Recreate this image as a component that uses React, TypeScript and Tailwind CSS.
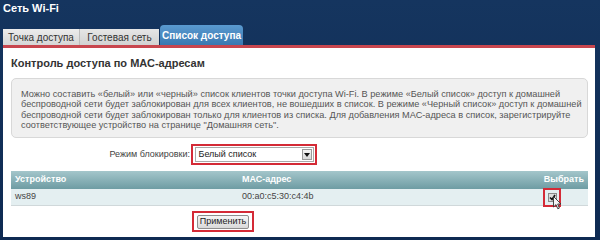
import React from "react";

export default function App() {
  return (
    <div
      className="relative w-[600px] h-[240px] overflow-hidden bg-gradient-to-b from-[#15355f] to-[#0e2a52]"
      style={{ fontFamily: '"Liberation Sans", Arial, sans-serif' }}
    >
      {/* Title */}
      <div className="h-[24px] pl-[3px] pt-[1px] text-[11px] font-bold leading-[14px] text-white">
        Сеть Wi-Fi
      </div>
      {/* Tabs */}
      <div className="flex h-[21px] items-end pl-[3px]">
        <div className="flex h-[16px] w-[77px] items-center justify-center border-r border-[#bdbdbd] bg-gradient-to-b from-[#ececec] to-[#d6d6d6] text-[10px] text-[#333]">
          Точка доступа
        </div>
        <div className="flex h-[16px] w-[79px] items-center justify-center bg-gradient-to-b from-[#e6e6e6] to-[#d2d2d2] text-[10px] text-[#333]">
          Гостевая сеть
        </div>
        <div className="ml-[1px] flex h-[20px] w-[83px] items-center justify-center rounded-t-[4px] bg-gradient-to-b from-[#5a9ad0] to-[#3a78b0] pt-[1px] text-[10px] font-bold text-white">
          Список доступа
        </div>
      </div>
      {/* Red line */}
      <div className="ml-[3px] h-[3px] w-[592px] bg-[#c8464e]"></div>
      {/* Panel */}
      <div className="relative ml-[3px] flex h-[189px] w-[592px] flex-col bg-white">
        <div className="pl-[8px] pt-[9px] text-[11px] font-bold leading-[13px] text-[#333]">
          Контроль доступа по МАС-адресам
        </div>
        <div className="ml-[8px] mt-[8px] h-[60px] w-[577px] whitespace-nowrap rounded-[5px] border border-[#d8d8d8] bg-[#f0f0f0] pl-[9px] pt-[10px] text-[9.2px] leading-[10.4px] text-[#555]">
          Можно составить «белый» или «черный» список клиентов точки доступа Wi-Fi. В режиме «Белый список» доступ к домашней
          <br />
          беспроводной сети будет заблокирован для всех клиентов, не вошедших в список. В режиме «Черный список» доступ к домашней
          <br />
          беспроводной сети будет заблокирован только для клиентов из списка. Для добавления МАС-адреса в список, зарегистрируйте
          <br />
          соответствующее устройство на странице "Домашняя сеть".
        </div>
        {/* Select row */}
        <div className="mt-[6px] flex h-[21px] items-center">
          <div className="w-[188px] pr-[1px] text-right text-[9px] text-[#444]">Режим блокировки:</div>
          <div className="flex h-[21px] w-[126px] items-center justify-center border-2 border-[#d42a36]">
            <div className="flex h-[15px] w-[119px] items-center justify-between border border-[#a9a9a9] bg-white pl-[3px] pr-[1px]">
              <span className="text-[9px] text-[#222]">Белый список</span>
              <span className="flex h-[11px] w-[10px] items-center justify-center border border-[#9a9a9a] bg-gradient-to-b from-[#f4f4f4] to-[#d8d8d8]">
                <svg width="6" height="4" viewBox="0 0 6 4">
                  <path d="M0 0 H6 L3 4 Z" fill="#111" />
                </svg>
              </span>
            </div>
          </div>
        </div>
        {/* Table */}
        <div className="ml-[8px] mt-[6px] w-[577px]">
          <div className="flex h-[18px] items-center bg-gradient-to-b from-[#a4c6cb] to-[#6e9ca3] text-[9px] font-bold text-white">
            <div className="w-[231px] pl-[4px]">Устройство</div>
            <div className="flex-1">МАС-адрес</div>
            <div className="pr-[4px]">Выбрать</div>
          </div>
          <div className="flex h-[17px] items-center border-b border-[#d0d8da] bg-[#e4eff1] text-[9px] text-[#444]">
            <div className="w-[231px] pl-[4px]">ws89</div>
            <div className="flex-1">00:a0:c5:30:c4:4b</div>
            <div className="mr-[27px] flex h-[19px] w-[18px] items-center justify-center border-2 border-[#d42a36]">
              <div className="flex h-[9px] w-[9px] items-center justify-center border border-[#8a8a8a] bg-[#dcdcdc]">
                <svg width="7" height="7" viewBox="0 0 7 7">
                  <path d="M1 3.5 L3 5.5 L6 1" stroke="#111" strokeWidth="1.6" fill="none" />
                </svg>
              </div>
            </div>
          </div>
        </div>
        {/* Apply */}
        <div className="ml-[189px] mt-[5px] flex h-[21px] w-[62px] items-center justify-center border-2 border-[#d42a36]">
          <div className="flex h-[14px] w-[52px] items-center justify-center rounded-[2px] border border-[#8e8e8e] bg-gradient-to-b from-[#f6f6f6] to-[#d9d9d9] text-[9px] text-[#222]">
            Применить
          </div>
        </div>
        {/* Cursor */}
        <svg
          className="absolute left-[550px] top-[148px]"
          width="9"
          height="14"
          viewBox="0 0 9 14"
        >
          <path
            d="M0.5 0.5 L0.5 11 L3 8.6 L4.8 12.8 L6.4 12.1 L4.7 8 L8 8 Z"
            fill="#f4f4f4"
            stroke="#333"
            strokeWidth="0.9"
          />
        </svg>
      </div>
    </div>
  );
}
